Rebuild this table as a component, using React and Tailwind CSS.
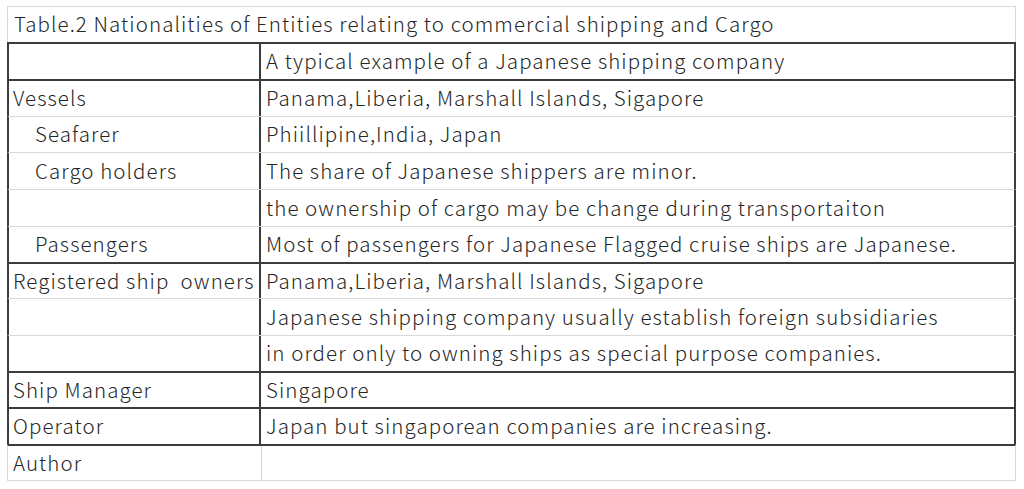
import React from 'react';

const rows = [
  { h: 'h-[37px]', top: 'dark', a: '', b: 'A typical example of a Japanese shipping company' },
  { h: 'h-[37px]', top: 'dark', a: 'Vessels', b: 'Panama,Liberia, Marshall Islands, Sigapore' },
  { h: 'h-[36px]', top: 'light', a: 'Seafarer', indent: true, b: 'Phiillipine,India, Japan' },
  { h: 'h-[37px]', top: 'light', a: 'Cargo holders', indent: true, b: 'The share of Japanese shippers are minor.' },
  { h: 'h-[37px]', top: 'light', a: '', b: 'the ownership of cargo may be change during transportaiton' },
  { h: 'h-[36px]', top: 'light', a: 'Passengers', indent: true, b: 'Most of passengers for Japanese Flagged cruise ships are Japanese.' },
  { h: 'h-[36px]', top: 'dark', a: 'Registered ship\u00a0 owners', b: 'Panama,Liberia, Marshall Islands, Sigapore' },
  { h: 'h-[37px]', top: 'light', a: '', b: 'Japanese shipping company usually establish foreign subsidiaries' },
  { h: 'h-[36px]', top: 'light', a: '', b: 'in order only to owning ships as special purpose companies.' },
  { h: 'h-[36px]', top: 'dark', a: 'Ship Manager', b: 'Singapore' },
  { h: 'h-[37px]', top: 'dark', a: 'Operator', b: 'Japan but singaporean companies are increasing.' },
];

const Row = ({ row }) => (
  <div
    className={`flex ${row.h} border-x-2 border-[#3c3c3c] ${
      row.top === 'dark' ? 'border-t-2 border-t-[#3c3c3c]' : 'border-t border-t-[#d9d9d9]'
    }`}
  >
    <div className={`w-[252px] shrink-0 border-r-2 border-[#3c3c3c] flex items-center pb-[2px] ${row.indent ? 'pl-[26px]' : 'pl-[4px]'}`}>
      <span className="whitespace-pre">{row.a}</span>
    </div>
    <div className="flex-1 flex items-center pl-[5px] pb-[2px]">
      <span className="whitespace-nowrap">{row.b}</span>
    </div>
  </div>
);

export default function App() {
  return (
    <div className="w-[1024px] h-[489px] bg-white pt-[6px] pl-[7px]">
      <div
        className="w-[1009px] text-[20.5px] font-light tracking-[1.07px] text-[#262626] leading-none"
        style={{ fontFamily: '"Noto Sans CJK JP", "Noto Sans", sans-serif' }}
      >
        <div className="h-[36px] flex items-center pl-[6px] pb-[2px] border-x border-t border-[#d9d9d9]">
          <span className="whitespace-nowrap">Table.2 Nationalities of Entities relating to commercial shipping and Cargo</span>
        </div>
        {rows.map((row, i) => (
          <Row key={i} row={row} />
        ))}
        <div className="flex h-[37px] border-t-2 border-t-[#3c3c3c] border-x border-b border-[#d9d9d9]">
          <div className="w-[254px] shrink-0 border-r border-[#d9d9d9] flex items-center pl-[5px] pb-[2px]">Author</div>
          <div className="flex-1" />
        </div>
      </div>
    </div>
  );
}
